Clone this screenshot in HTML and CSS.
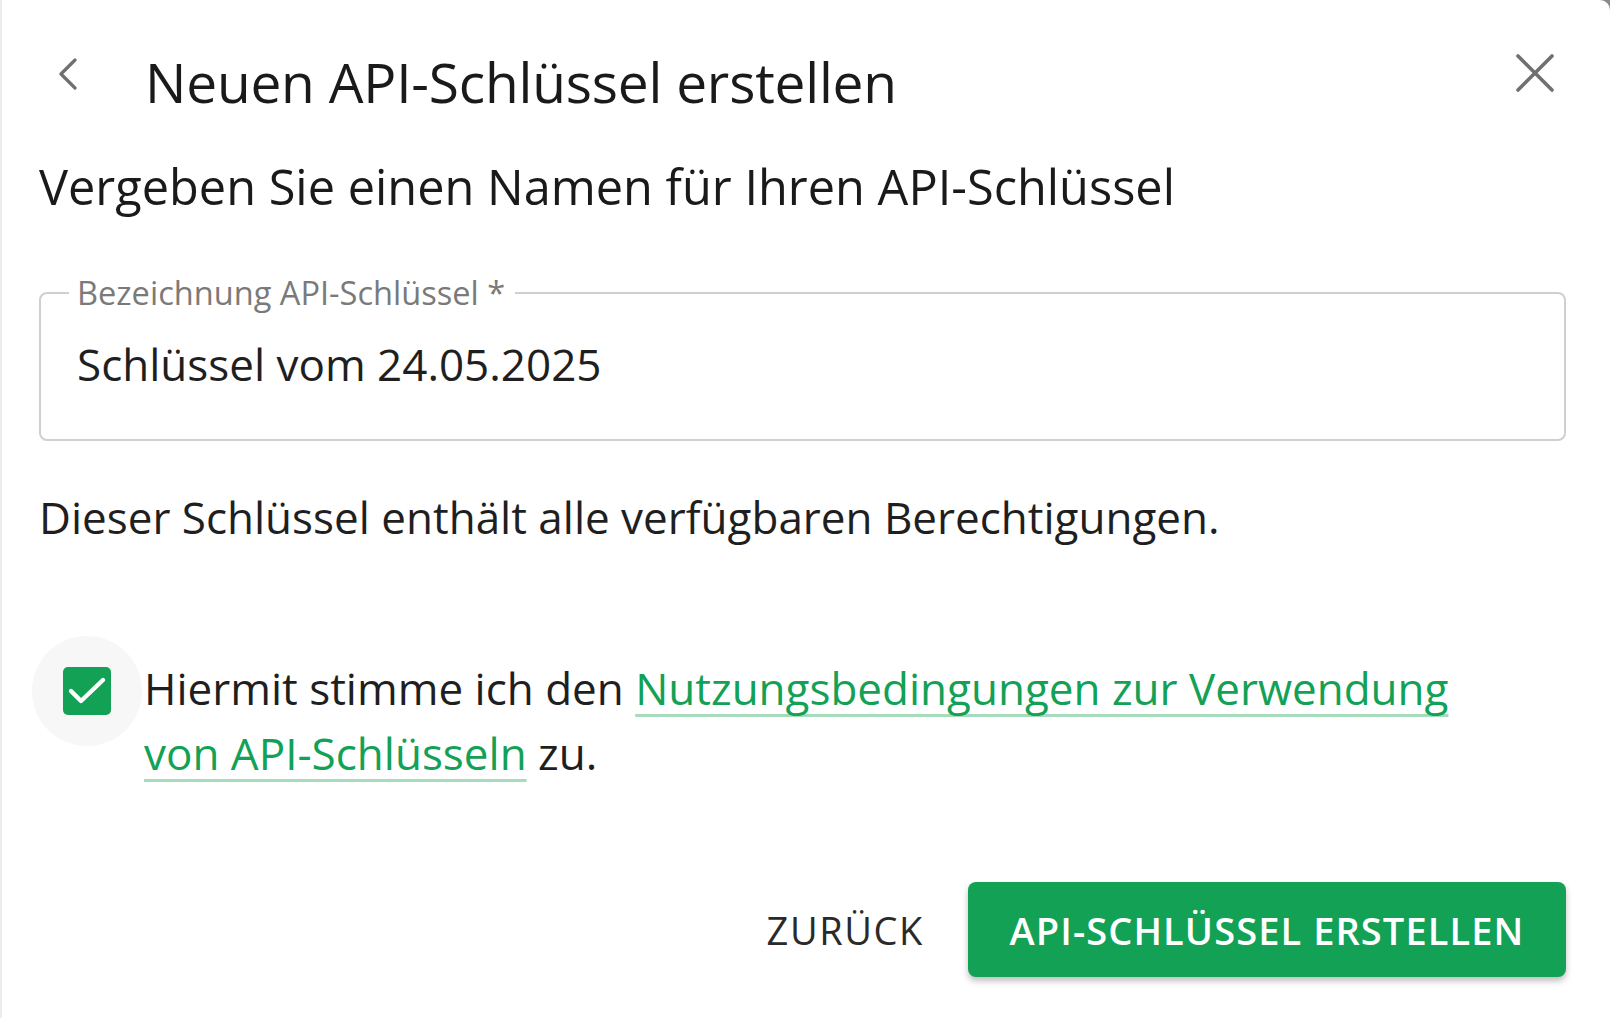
FILE: index.html
```html
<!DOCTYPE html>
<html lang="de">

<head>
    <meta charset="UTF-8">
    <meta name="viewport" content="width=device-width, initial-scale=1.0">
    <title>Neuen API-Schlüssel erstellen</title>
    <link rel="stylesheet" href="styles.css">
</head>

<body>
    <div class="dialog">
        <header class="dialog-header">
            <button class="icon-btn back-btn" aria-label="Zurück">
                <svg width="20" height="32" viewBox="0 0 20 32">
                    <path d="M17 2 L3 16 L17 30" fill="none" stroke="#707070" stroke-width="3.2" stroke-linecap="round" stroke-linejoin="round" />
                </svg>
            </button>
            <h1 class="dialog-title">Neuen API-Schlüssel erstellen</h1>
            <button class="icon-btn close-btn" aria-label="Schließen">
                <svg width="38" height="38" viewBox="0 0 38 38">
                    <path d="M2 2 L36 36 M36 2 L2 36" fill="none" stroke="#707070" stroke-width="3.6" stroke-linecap="round" />
                </svg>
            </button>
        </header>

        <h2 class="subtitle">Vergeben Sie einen Namen für Ihren API-Schlüssel</h2>

        <fieldset class="field">
            <legend>Bezeichnung API-Schlüssel *</legend>
            <div class="field-value">Schlüssel vom 24.05.2025</div>
        </fieldset>

        <p class="info">Dieser Schlüssel enthält alle verfügbaren Berechtigungen.</p>

        <div class="consent">
            <div class="checkbox-wrap">
                <span class="checkbox">
                    <svg width="40" height="30" viewBox="0 0 40 30">
                        <path d="M4 15 L14 25 L36 4" fill="none" stroke="#fff" stroke-width="4.4" stroke-linecap="round" stroke-linejoin="round" />
                    </svg>
                </span>
            </div>
            <p class="consent-text">Hiermit stimme ich den <a href="#">Nutzungsbedingungen zur Verwendung von API-Schlüsseln</a> zu.</p>
        </div>

        <div class="actions">
            <button class="text-btn">Zurück</button>
            <button class="primary-btn">API-Schlüssel erstellen</button>
        </div>
    </div>
</body>

</html>
```

FILE: styles.css
```css
/* General reset */

* {
    margin: 0;
    padding: 0;
    box-sizing: border-box;
}

html,
body {
    height: 100%;
}

body {
    font-family: "Open Sans", "Noto Sans", sans-serif;
    background-color: #8a8a8a;
    color: #1f1f1f;
    overflow: hidden;
}

.dialog {
    height: 100%;
    background-color: #fff;
    border-left: 2px solid #ececec;
    border-top-right-radius: 10px;
    padding: 0 44px 0 37px;
}

.dialog-header {
    display: flex;
    align-items: center;
    height: 150px;
    padding-top: 6px;
}

.icon-btn {
    background: none;
    border: none;
    cursor: pointer;
    display: flex;
    align-items: center;
    justify-content: center;
}

.back-btn {
    margin-left: 19px;
    width: 20px;
    height: 32px;
    margin-top: -8px;
}

.dialog-title {
    flex: 1;
    margin-left: 67px;
    margin-top: 6px;
    font-size: 55px;
    font-weight: 500;
    letter-spacing: -0.2px;
    color: #1a1a1a;
}

.close-btn {
    width: 38px;
    height: 38px;
    margin-right: 12px;
    margin-top: -10px;
}

.subtitle {
    margin-top: 5px;
    font-size: 48.7px;
    font-weight: 500;
    color: #1a1a1a;
    line-height: 1.3;
}

.field {
    margin-top: 52px;
    border: 2px solid #cfcfcf;
    border-radius: 8px;
    padding: 19px 36px 0;
    height: 171px;
}

.field legend {
    margin-left: -8px;
    padding: 0 10px 0 8px;
    font-size: 32.6px;
    color: #7a7a7a;
}

.field-value {
    font-size: 44px;
    color: #1f1f1f;
}

.info {
    margin-top: 46px;
    font-size: 44px;
    color: #1f1f1f;
}

.consent {
    display: flex;
    align-items: flex-start;
    margin-top: 89px;
}

.checkbox-wrap {
    width: 110px;
    height: 110px;
    border-radius: 50%;
    background-color: #f7f7f7;
    display: flex;
    align-items: center;
    justify-content: center;
    margin-left: -7px;
    flex-shrink: 0;
}

.checkbox {
    width: 48px;
    height: 48px;
    border-radius: 5px;
    background-color: #12a155;
    display: flex;
    align-items: center;
    justify-content: center;
}

.consent-text {
    margin-left: 2px;
    margin-top: 20px;
    font-size: 44px;
    line-height: 65px;
    color: #1f1f1f;
    max-width: 1320px;
}

.consent-text a {
    color: #12a155;
    text-decoration: underline;
    text-decoration-color: #a6dbbb;
    text-decoration-thickness: 3px;
    text-underline-offset: 9px;
    text-decoration-skip-ink: none;
}

.actions {
    display: flex;
    justify-content: flex-end;
    align-items: center;
    gap: 44px;
    margin-top: 96px;
}

.text-btn {
    background: none;
    border: none;
    font-family: inherit;
    font-size: 38px;
    font-weight: 500;
    letter-spacing: 1.6px;
    text-transform: uppercase;
    color: #2a2a2a;
    cursor: pointer;
}

.primary-btn {
    width: 598px;
    height: 95px;
    background-color: #12a155;
    color: #fff;
    border: none;
    border-radius: 8px;
    font-family: inherit;
    font-size: 38px;
    font-weight: 600;
    letter-spacing: 1.1px;
    text-transform: uppercase;
    box-shadow: 0 4px 6px rgba(0, 0, 0, 0.25);
    cursor: pointer;
}
```
